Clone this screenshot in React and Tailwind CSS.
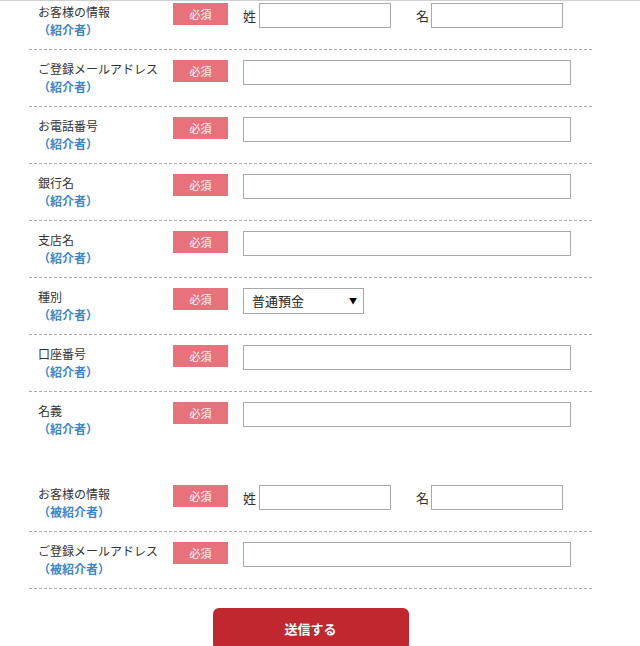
import React from "react";

const font = { fontFamily: '"Noto Sans CJK JP", "Noto Sans", sans-serif' };

function Badge() {
  return (
    <div className="w-[55px] h-[22px] shrink-0 bg-[#e8727b] text-white text-[11px] leading-[22px] text-center">
      必須
    </div>
  );
}

function Label({ title, sub }) {
  return (
    <div className="w-[144px] shrink-0 pl-[9px] text-[12px] leading-[18px]">
      <div className="text-[#333] whitespace-nowrap">{title}</div>
      <div className="text-[#3c86c8] font-bold">（{sub}）</div>
    </div>
  );
}

function TextInput({ w = "w-[328px]" }) {
  return <div className={`${w} h-[25px] border border-[#a9a9a9] bg-white`} />;
}

function Row({ title, sub, children, first = false, last = false }) {
  return (
    <div
      className={`flex items-start ${first ? "pt-[2px]" : "pt-[10px]"} pb-[10px] ${
        last ? "" : "border-b border-dashed border-[#aaa]"
      }`}
    >
      <Label title={title} sub={sub} />
      <Badge />
      <div className="ml-[15px] flex items-center">{children}</div>
    </div>
  );
}

function NameInputs() {
  return (
    <div className="flex items-center text-[13px] text-[#333]">
      <span className="w-[16px]">姓</span>
      <TextInput w="w-[132px]" />
      <span className="ml-[25px] w-[15px]">名</span>
      <TextInput w="w-[132px]" />
    </div>
  );
}

function Select() {
  return (
    <div className="w-[121px] h-[26px] border border-[#a9a9a9] bg-white flex items-center justify-between pl-[8px] pr-[6px] text-[13px] text-[#222]">
      <span>普通預金</span>
      <span className="text-[8px] text-black">▼</span>
    </div>
  );
}

export default function App() {
  return (
    <div className="w-[640px] h-[646px] bg-white overflow-hidden" style={font}>
      <div className="h-px bg-[#cfcfcf]" />
      <div className="ml-[29px] w-[563px]">
        <Row title="お客様の情報" sub="紹介者" first>
          <NameInputs />
        </Row>
        <Row title="ご登録メールアドレス" sub="紹介者">
          <TextInput />
        </Row>
        <Row title="お電話番号" sub="紹介者">
          <TextInput />
        </Row>
        <Row title="銀行名" sub="紹介者">
          <TextInput />
        </Row>
        <Row title="支店名" sub="紹介者">
          <TextInput />
        </Row>
        <Row title="種別" sub="紹介者">
          <Select />
        </Row>
        <Row title="口座番号" sub="紹介者">
          <TextInput />
        </Row>
        <Row title="名義" sub="紹介者" last>
          <TextInput />
        </Row>

        <div className="mt-[27px]">
          <Row title="お客様の情報" sub="被紹介者">
            <NameInputs />
          </Row>
          <Row title="ご登録メールアドレス" sub="被紹介者">
            <TextInput />
          </Row>
        </div>

        <div className="flex justify-center pt-[19px]">
          <button className="w-[196px] h-[42px] rounded-[6px] bg-[#c1272f] text-white text-[13px] font-bold">
            送信する
          </button>
        </div>
      </div>
    </div>
  );
}
